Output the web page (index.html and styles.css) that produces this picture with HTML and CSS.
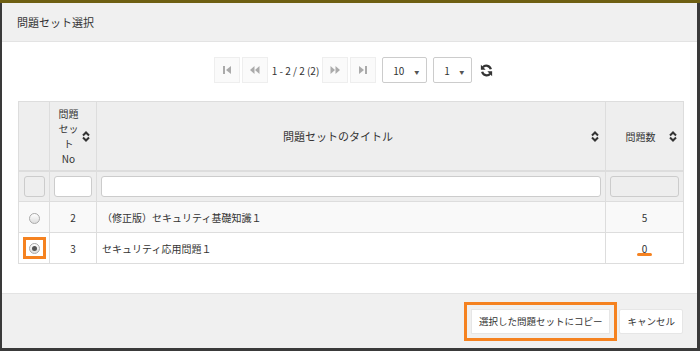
FILE: index.html
```html
<!DOCTYPE html>
<html lang="ja">
<head>
    <meta charset="UTF-8">
    <title>問題セット選択</title>
    <link rel="stylesheet" href="styles.css">
</head>
<body>
    <div class="modal">
        <!-- En-tête -->
        <div class="modal-header">
            <h4 class="modal-title">問題セット選択</h4>
        </div>

        <div class="modal-body">
            <!-- Pagination -->
            <div class="pager">
                <span class="pg-btn">
                    <svg width="10" height="10" viewBox="0 0 10 10"><rect x="1" y="1" width="2" height="8" fill="#aaa"/><path d="M9 1 L4 5 L9 9 Z" fill="#aaa"/></svg>
                </span>
                <span class="pg-btn">
                    <svg width="11" height="10" viewBox="0 0 11 10"><path d="M5.5 1 L1 5 L5.5 9 Z M10.5 1 L6 5 L10.5 9 Z" fill="#aaa"/></svg>
                </span>
                <span class="pg-info">1 - 2 / 2 (2)</span>
                <span class="pg-btn">
                    <svg width="11" height="10" viewBox="0 0 11 10"><path d="M0.5 1 L5 5 L0.5 9 Z M5.5 1 L10 5 L5.5 9 Z" fill="#aaa"/></svg>
                </span>
                <span class="pg-btn">
                    <svg width="10" height="10" viewBox="0 0 10 10"><path d="M1 1 L6 5 L1 9 Z" fill="#aaa"/><rect x="7" y="1" width="2" height="8" fill="#aaa"/></svg>
                </span>
                <span class="pg-select wide">10 <i class="caret">▼</i></span>
                <span class="pg-select">1 <i class="caret">▼</i></span>
                <span class="pg-refresh">
                    <svg width="13" height="13" viewBox="0 0 12 12"><path d="M10 4.8 A4.3 4.3 0 0 0 2.6 3" fill="none" stroke="#333" stroke-width="2.1"/><path d="M0.8 0.6 L0.8 5.2 L5.2 5.2 Z" fill="#333"/><path d="M2 7.2 A4.3 4.3 0 0 0 9.4 9" fill="none" stroke="#333" stroke-width="2.1"/><path d="M11.2 11.4 L11.2 6.8 L6.8 6.8 Z" fill="#333"/></svg>
                </span>
            </div>

            <!-- Tableau -->
            <table class="grid">
                <colgroup>
                    <col class="c-radio">
                    <col class="c-no">
                    <col class="c-title">
                    <col class="c-count">
                </colgroup>
                <thead>
                    <tr class="head-row">
                        <th></th>
                        <th>
                            <div class="th-inner th-no"><span class="th-no-label">問題セットNo</span><svg class="sort" width="8" height="11" viewBox="0 0 8 11"><path d="M1 4.5 L4 1.5 L7 4.5 M1 6.5 L4 9.5 L7 6.5" fill="none" stroke="#333" stroke-width="2"/></svg></div>
                        </th>
                        <th>
                            <div class="th-inner"><span class="th-label">問題セットのタイトル</span><svg class="sort" width="8" height="11" viewBox="0 0 8 11"><path d="M1 4.5 L4 1.5 L7 4.5 M1 6.5 L4 9.5 L7 6.5" fill="none" stroke="#333" stroke-width="2"/></svg></div>
                        </th>
                        <th>
                            <div class="th-inner"><span class="th-label narrow">問題数</span><svg class="sort" width="8" height="11" viewBox="0 0 8 11"><path d="M1 4.5 L4 1.5 L7 4.5 M1 6.5 L4 9.5 L7 6.5" fill="none" stroke="#333" stroke-width="2"/></svg></div>
                        </th>
                    </tr>
                    <tr class="filter-row">
                        <td><span class="filter disabled small"></span></td>
                        <td><span class="filter"></span></td>
                        <td><span class="filter"></span></td>
                        <td><span class="filter disabled"></span></td>
                    </tr>
                </thead>
                <tbody>
                    <tr class="odd">
                        <td class="center"><span class="radio"></span></td>
                        <td class="center">2</td>
                        <td>（修正版）セキュリティ基礎知識１</td>
                        <td class="center">5</td>
                    </tr>
                    <tr>
                        <td class="center"><span class="mark-box"><span class="radio checked"></span></span></td>
                        <td class="center">3</td>
                        <td>セキュリティ応用問題１</td>
                        <td class="center"><span class="mark-line">0</span></td>
                    </tr>
                </tbody>
            </table>
        </div>

        <!-- Pied -->
        <div class="modal-footer">
            <button class="btn btn-marked">選択した問題セットにコピー</button>
            <button class="btn">キャンセル</button>
        </div>
    </div>
</body>
</html>
```

FILE: styles.css
```css
html, body {
    margin: 0;
    height: 100%;
}

body {
    font-family: "Noto Sans CJK JP", "Open Sans", sans-serif;
    background: linear-gradient(#6e5f12 0, #6e5f12 3px, #3a3a3a 3px);
    color: #333;
    padding: 3px 3px 3px 2px;
    box-sizing: border-box;
}

.modal {
    background: #fff;
    height: 345px;
    display: flex;
    flex-direction: column;
}

.modal-header {
    background: #f0f0f0;
    height: 38px;
    border-bottom: 1px solid #e3e3e3;
    display: flex;
    align-items: center;
    padding-left: 15px;
}

.modal-title {
    margin: 0;
    font-size: 11px;
    font-weight: normal;
    color: #333;
}

.modal-body {
    flex: 1;
    padding: 15px 14px 0 16px;
}

/* Pagination */
.pager {
    display: flex;
    justify-content: center;
    align-items: center;
    height: 26px;
    margin-left: 6px;
}

.pg-btn {
    width: 26px;
    height: 26px;
    border: 1px solid #eee;
    box-sizing: border-box;
    background: #fafafa;
    display: flex;
    align-items: center;
    justify-content: center;
    margin-right: 2px;
}

.pg-info {
    font-size: 10px;
    margin: 0 3px 0 2px;
    color: #333;
}

.pg-select {
    height: 26px;
    width: 39px;
    box-sizing: border-box;
    border: 1px solid #ccc;
    border-radius: 2px;
    font-size: 10px;
    display: flex;
    align-items: center;
    padding-left: 10px;
    margin-left: 6px;
    position: relative;
}

.pg-select.wide {
    width: 45px;
    margin-left: 4px;
}

.caret {
    font-style: normal;
    font-size: 5px;
    color: #555;
    position: absolute;
    right: 7px;
    top: 10px;
}

.pg-refresh {
    margin-left: 8px;
    display: flex;
}

/* Tableau */
.grid {
    margin-top: 18px;
    width: 665px;
    border-collapse: collapse;
    table-layout: fixed;
    font-size: 11px;
}

.c-radio { width: 31px; }
.c-no { width: 47px; }
.c-title { width: 509px; }
.c-count { width: 78px; }

.grid th, .grid td {
    border: 1px solid #ddd;
    padding: 0;
}

.head-row th {
    background: #eee;
    height: 68px;
    font-weight: normal;
    border-bottom-width: 2px;
}

.th-inner {
    display: flex;
    align-items: center;
    padding: 0 6px 0 8px;
}

.th-label {
    flex: 1;
    text-align: center;
    padding-right: 20px;
}

.th-label.narrow {
    padding-right: 2px;
    font-size: 10px;
}

.th-no {
    padding: 0 6px 0 8px;
    justify-content: space-between;
    font-size: 10px;
}

.th-no-label {
    width: 21px;
    line-height: 15px;
    text-align: center;
}

.sort {
    flex: none;
}

.grid .filter-row td {
    background: #eee;
    height: 29px;
    padding: 0 4px;
}

.filter {
    display: block;
    height: 21px;
    border: 1px solid #ccc;
    border-radius: 3px;
    background: #fff;
    box-sizing: border-box;
}

.filter.disabled {
    background: #eee;
}

.filter.small {
    width: 21px;
    margin: 0 auto;
}

.grid tbody td {
    height: 30px;
    padding-left: 5px;
    font-size: 10px;
}

.grid tbody tr.odd td {
    background: #f9f9f9;
}

.grid tbody td.center {
    text-align: center;
    padding-left: 0;
}

.radio {
    display: inline-block;
    width: 9px;
    height: 9px;
    border: 1px solid #aaa;
    border-radius: 50%;
    background: linear-gradient(#fff, #ddd);
    vertical-align: middle;
    position: relative;
}

.radio.checked::after {
    content: "";
    position: absolute;
    left: 2px;
    top: 2px;
    width: 5px;
    height: 5px;
    border-radius: 50%;
    background: #555;
}

.mark-box {
    display: inline-flex;
    align-items: center;
    justify-content: center;
    width: 23px;
    height: 22px;
    box-sizing: border-box;
    border: 3px solid #f58220;
}

.mark-line {
    display: inline-block;
    position: relative;
}

.mark-line::after {
    content: "";
    position: absolute;
    left: -5px;
    right: -5px;
    bottom: 0;
    height: 3px;
    border-radius: 2px;
    background: #f58220;
}

/* Pied */
.modal-footer {
    background: #f0f0f0;
    border-top: 1px solid #e3e3e3;
    height: 54px;
    display: flex;
    justify-content: flex-end;
    align-items: center;
    padding-right: 14px;
    gap: 9px;
}

.btn {
    font-family: inherit;
    font-size: 9.5px;
    color: #333;
    background: #fff;
    border: 1px solid #e6e6e6;
    border-radius: 2px;
    height: 25px;
    padding: 0 7px;
    cursor: pointer;
}

.btn-marked {
    border-radius: 0;
    outline: 3px solid #f58220;
    outline-offset: 4px;
}
```
